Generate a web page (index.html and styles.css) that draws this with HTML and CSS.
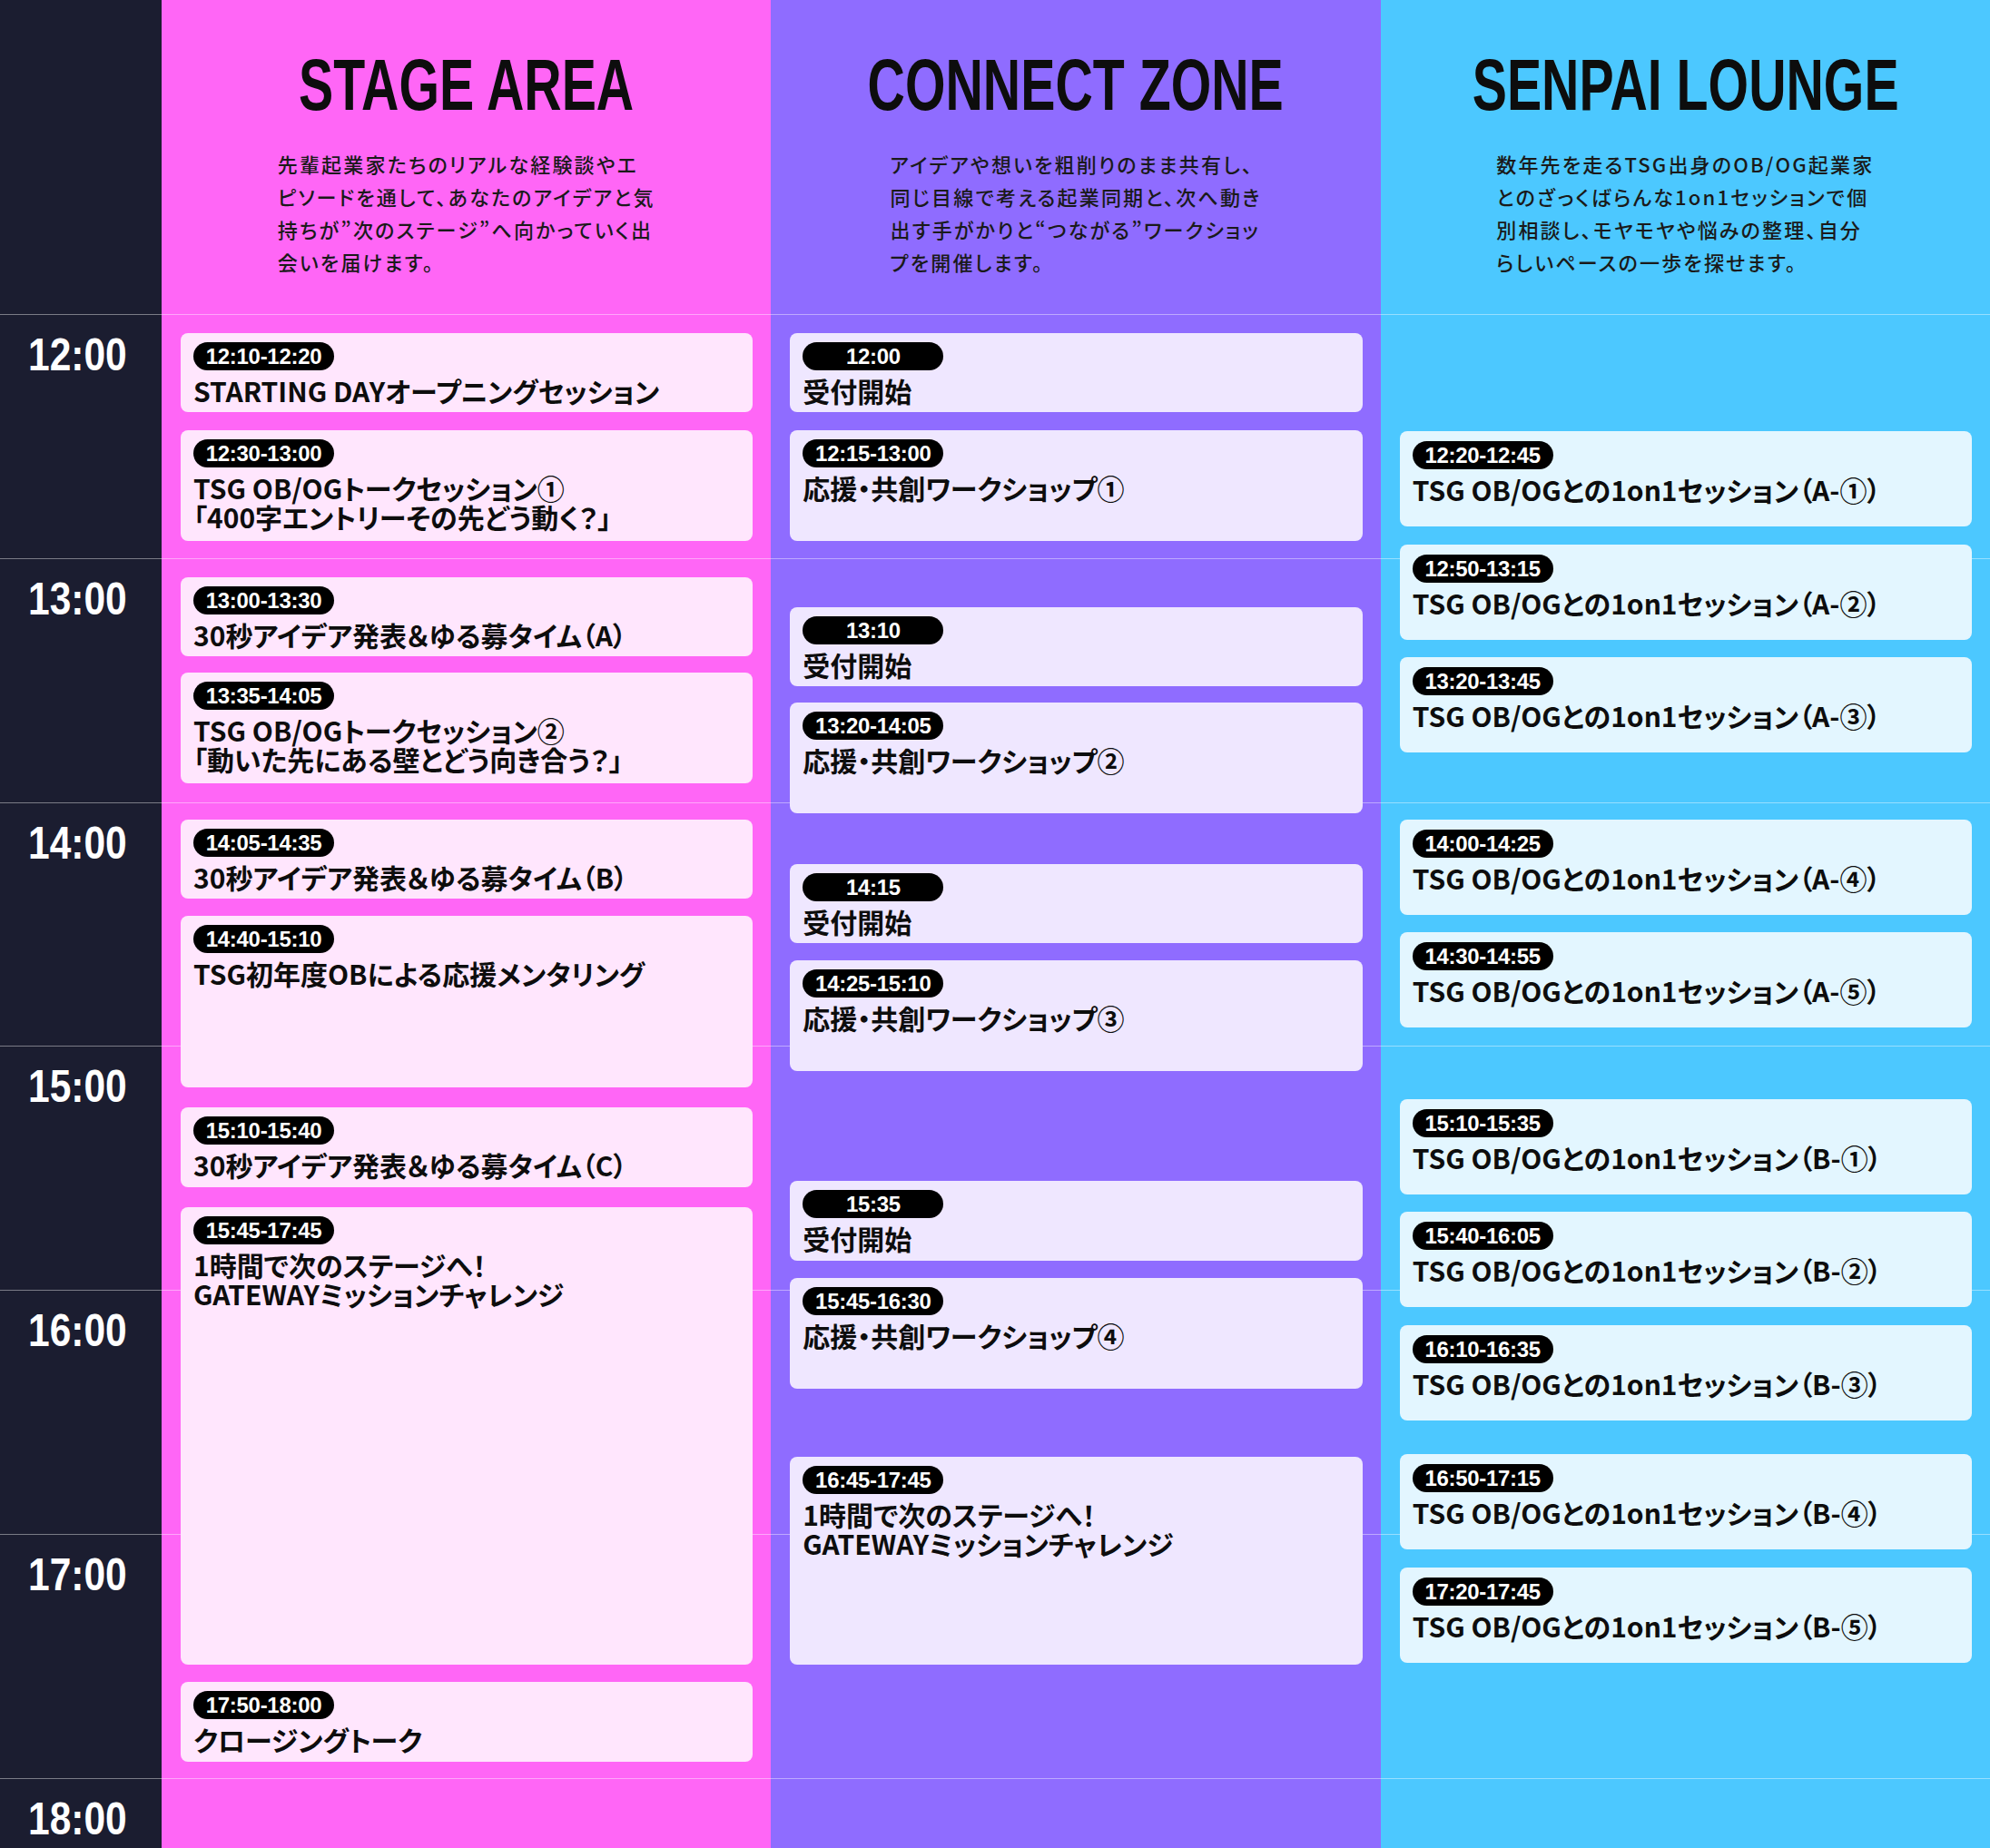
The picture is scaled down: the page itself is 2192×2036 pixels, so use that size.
FILE: index.html
```html
<!DOCTYPE html>
<html lang="ja">
<head>
<meta charset="utf-8">
<title>TIMETABLE</title>
<link rel="stylesheet" href="styles.css">
</head>
<body>
<div class="timetable">
  <div class="corner"></div>

  <header class="zone-head bg-stage col-2">
    <h2 class="zone-title">STAGE AREA</h2>
    <p class="zone-desc">先輩起業家たちのリアルな経験談やエ<br>ピソードを通して、あなたのアイデアと気<br>持ちが”次のステージ”へ向かっていく出<br>会いを届けます。</p>
  </header>
  <header class="zone-head bg-connect col-3">
    <h2 class="zone-title">CONNECT ZONE</h2>
    <p class="zone-desc">アイデアや想いを粗削りのまま共有し、<br>同じ目線で考える起業同期と、次へ動き<br>出す手がかりと“つながる”ワークショッ<br>プを開催します。</p>
  </header>
  <header class="zone-head bg-senpai col-4">
    <h2 class="zone-title">SENPAI LOUNGE</h2>
    <p class="zone-desc">数年先を走るTSG出身のOB/OG起業家<br>とのざっくばらんな1on1セッションで個<br>別相談し、モヤモヤや悩みの整理、自分<br>らしいペースの一歩を探せます。</p>
  </header>

  <section class="zone bg-stage col-2 stage">
    <article class="card h-87 mt-21"><span class="pill">12:10-12:20</span><h3 class="card-title">STARTING DAYオープニングセッション</h3></article>
    <article class="card h-122 mt-20"><span class="pill">12:30-13:00</span><h3 class="card-title"><span class="line">TSG OB/OGトークセッション①</span><span class="line">「400字エントリーその先どう動く？」</span></h3></article>
    <article class="card h-87 mt-40"><span class="pill">13:00-13:30</span><h3 class="card-title">30秒アイデア発表＆ゆる募タイム（A）</h3></article>
    <article class="card h-122 mt-18"><span class="pill">13:35-14:05</span><h3 class="card-title"><span class="line">TSG OB/OGトークセッション②</span><span class="line">「動いた先にある壁とどう向き合う？」</span></h3></article>
    <article class="card h-87 mt-40"><span class="pill">14:05-14:35</span><h3 class="card-title">30秒アイデア発表＆ゆる募タイム（B）</h3></article>
    <article class="card h-189 mt-19"><span class="pill">14:40-15:10</span><h3 class="card-title">TSG初年度OBによる応援メンタリング</h3></article>
    <article class="card h-88 mt-22"><span class="pill">15:10-15:40</span><h3 class="card-title">30秒アイデア発表＆ゆる募タイム（C）</h3></article>
    <article class="card h-504 mt-22"><span class="pill">15:45-17:45</span><h3 class="card-title"><span class="line">1時間で次のステージへ！</span><span class="line">GATEWAYミッションチャレンジ</span></h3></article>
    <article class="card h-88 mt-19"><span class="pill">17:50-18:00</span><h3 class="card-title">クロージングトーク</h3></article>
  </section>

  <section class="zone bg-connect col-3 connect">
    <article class="card h-87 mt-21"><span class="pill">12:00</span><h3 class="card-title">受付開始</h3></article>
    <article class="card h-122 mt-20"><span class="pill">12:15-13:00</span><h3 class="card-title">応援・共創ワークショップ①</h3></article>
    <article class="card h-87 mt-73"><span class="pill">13:10</span><h3 class="card-title">受付開始</h3></article>
    <article class="card h-122 mt-18"><span class="pill">13:20-14:05</span><h3 class="card-title">応援・共創ワークショップ②</h3></article>
    <article class="card h-87 mt-56"><span class="pill">14:15</span><h3 class="card-title">受付開始</h3></article>
    <article class="card h-122 mt-19"><span class="pill">14:25-15:10</span><h3 class="card-title">応援・共創ワークショップ③</h3></article>
    <article class="card h-88 mt-121"><span class="pill">15:35</span><h3 class="card-title">受付開始</h3></article>
    <article class="card h-122 mt-19"><span class="pill">15:45-16:30</span><h3 class="card-title">応援・共創ワークショップ④</h3></article>
    <article class="card h-229 mt-75"><span class="pill">16:45-17:45</span><h3 class="card-title"><span class="line">1時間で次のステージへ！</span><span class="line">GATEWAYミッションチャレンジ</span></h3></article>
  </section>

  <section class="zone bg-senpai col-4 senpai">
    <article class="card h-105 mt-129"><span class="pill">12:20-12:45</span><h3 class="card-title">TSG OB/OGとの1on1セッション（A-①）</h3></article>
    <article class="card h-105 mt-20"><span class="pill">12:50-13:15</span><h3 class="card-title">TSG OB/OGとの1on1セッション（A-②）</h3></article>
    <article class="card h-105 mt-19"><span class="pill">13:20-13:45</span><h3 class="card-title">TSG OB/OGとの1on1セッション（A-③）</h3></article>
    <article class="card h-105 mt-74"><span class="pill">14:00-14:25</span><h3 class="card-title">TSG OB/OGとの1on1セッション（A-④）</h3></article>
    <article class="card h-105 mt-19"><span class="pill">14:30-14:55</span><h3 class="card-title">TSG OB/OGとの1on1セッション（A-⑤）</h3></article>
    <article class="card h-105 mt-79"><span class="pill">15:10-15:35</span><h3 class="card-title">TSG OB/OGとの1on1セッション（B-①）</h3></article>
    <article class="card h-105 mt-19"><span class="pill">15:40-16:05</span><h3 class="card-title">TSG OB/OGとの1on1セッション（B-②）</h3></article>
    <article class="card h-105 mt-20"><span class="pill">16:10-16:35</span><h3 class="card-title">TSG OB/OGとの1on1セッション（B-③）</h3></article>
    <article class="card h-105 mt-37"><span class="pill">16:50-17:15</span><h3 class="card-title">TSG OB/OGとの1on1セッション（B-④）</h3></article>
    <article class="card h-105 mt-20"><span class="pill">17:20-17:45</span><h3 class="card-title">TSG OB/OGとの1on1セッション（B-⑤）</h3></article>
  </section>

  <div class="hours">
    <div class="hour"><span class="hour-label">12:00</span></div>
    <div class="hour"><span class="hour-label">13:00</span></div>
    <div class="hour"><span class="hour-label">14:00</span></div>
    <div class="hour"><span class="hour-label">15:00</span></div>
    <div class="hour"><span class="hour-label">16:00</span></div>
    <div class="hour"><span class="hour-label">17:00</span></div>
    <div class="hour"><span class="hour-label">18:00</span></div>
  </div>
</div>
</body>
</html>
```

FILE: styles.css
```css
* {
  box-sizing: border-box;
  margin: 0;
  padding: 0;
}

html, body {
  width: 2192px;
  height: 2036px;
  overflow: hidden;
}

body {
  background: #1b1d30;
  font-family: "Noto Sans CJK JP", "Noto Sans", sans-serif;
  color: #111;
}

.timetable {
  display: grid;
  grid-template-columns: 178px repeat(3, 1fr);
  grid-template-rows: 346px 1690px;
  height: 2036px;
  overflow: hidden;
  background: #1b1d30;
}

.corner {
  grid-column: 1;
  grid-row: 1;
}

.col-2 { grid-column: 2; }
.col-3 { grid-column: 3; }
.col-4 { grid-column: 4; }

.bg-stage { background: #ff66f6; }
.bg-connect { background: #8f6cff; }
.bg-senpai { background: #4cc8ff; }

/* header */
.zone-head {
  grid-row: 1;
  display: flex;
  flex-direction: column;
  align-items: center;
  padding-top: 54px;
}

.zone-title {
  width: 100%;
  text-align: center;
  font-family: "Liberation Sans", Arial, sans-serif;
  font-weight: 700;
  font-size: 79px;
  line-height: 79px;
  white-space: nowrap;
  transform: scaleX(0.725);
  color: #0d0d0d;
}

.zone-desc {
  margin-top: 29px;
  font-size: 22px;
  font-weight: 500;
  line-height: 36px;
  letter-spacing: 0.1em;
  font-feature-settings: "palt";
  white-space: nowrap;
  color: #1a1a1a;
}

/* body columns */
.zone {
  grid-row: 2;
  display: flex;
  flex-direction: column;
  padding: 0 20px 0 21px;
}

.card {
  position: relative;
  z-index: 2;
  flex: none;
  border-radius: 8px;
  padding: 10px 14px;
}

.stage .card { background: #ffe6fd; }
.connect .card { background: #efe7ff; }
.senpai .card { background: #e3f6ff; padding-top: 11px; }

.pill {
  display: block;
  width: 155px;
  height: 31px;
  border-radius: 16px;
  background: #000;
  color: #fff;
  font-family: "Liberation Sans", Arial, sans-serif;
  font-weight: 700;
  font-size: 24px;
  line-height: 31px;
  letter-spacing: -0.3px;
  text-align: center;
}

.card-title {
  margin-top: 6px;
  font-weight: 700;
  font-size: 30px;
  line-height: 32px;
  font-feature-settings: "palt";
  white-space: nowrap;
  color: #0d0d0d;
}

.card-title .line {
  display: block;
}

/* card heights */
.h-87 { height: 87px; }
.h-88 { height: 88px; }
.h-105 { height: 105px; }
.h-122 { height: 122px; }
.h-189 { height: 189px; }
.h-229 { height: 229px; }
.h-504 { height: 504px; }

/* card spacing */
.mt-18 { margin-top: 18px; }
.mt-19 { margin-top: 19px; }
.mt-20 { margin-top: 20px; }
.mt-21 { margin-top: 21px; }
.mt-22 { margin-top: 22px; }
.mt-37 { margin-top: 37px; }
.mt-40 { margin-top: 40px; }
.mt-56 { margin-top: 56px; }
.mt-73 { margin-top: 73px; }
.mt-74 { margin-top: 74px; }
.mt-75 { margin-top: 75px; }
.mt-79 { margin-top: 79px; }
.mt-121 { margin-top: 121px; }
.mt-129 { margin-top: 129px; }

/* hour rules and labels */
.hours {
  grid-column: 1 / -1;
  grid-row: 2;
  z-index: 1;
  overflow: hidden;
  pointer-events: none;
}

.hour {
  height: 268.83px;
  padding: 19px 0 0 31px;
  border-top: 1px solid rgba(255, 255, 255, 0.42);
}

.hour-label {
  display: inline-block;
  font-family: "Liberation Sans", Arial, sans-serif;
  font-weight: 700;
  font-size: 50px;
  line-height: 50px;
  color: #fff;
  transform: scaleX(0.85);
  transform-origin: 0 0;
}
```
